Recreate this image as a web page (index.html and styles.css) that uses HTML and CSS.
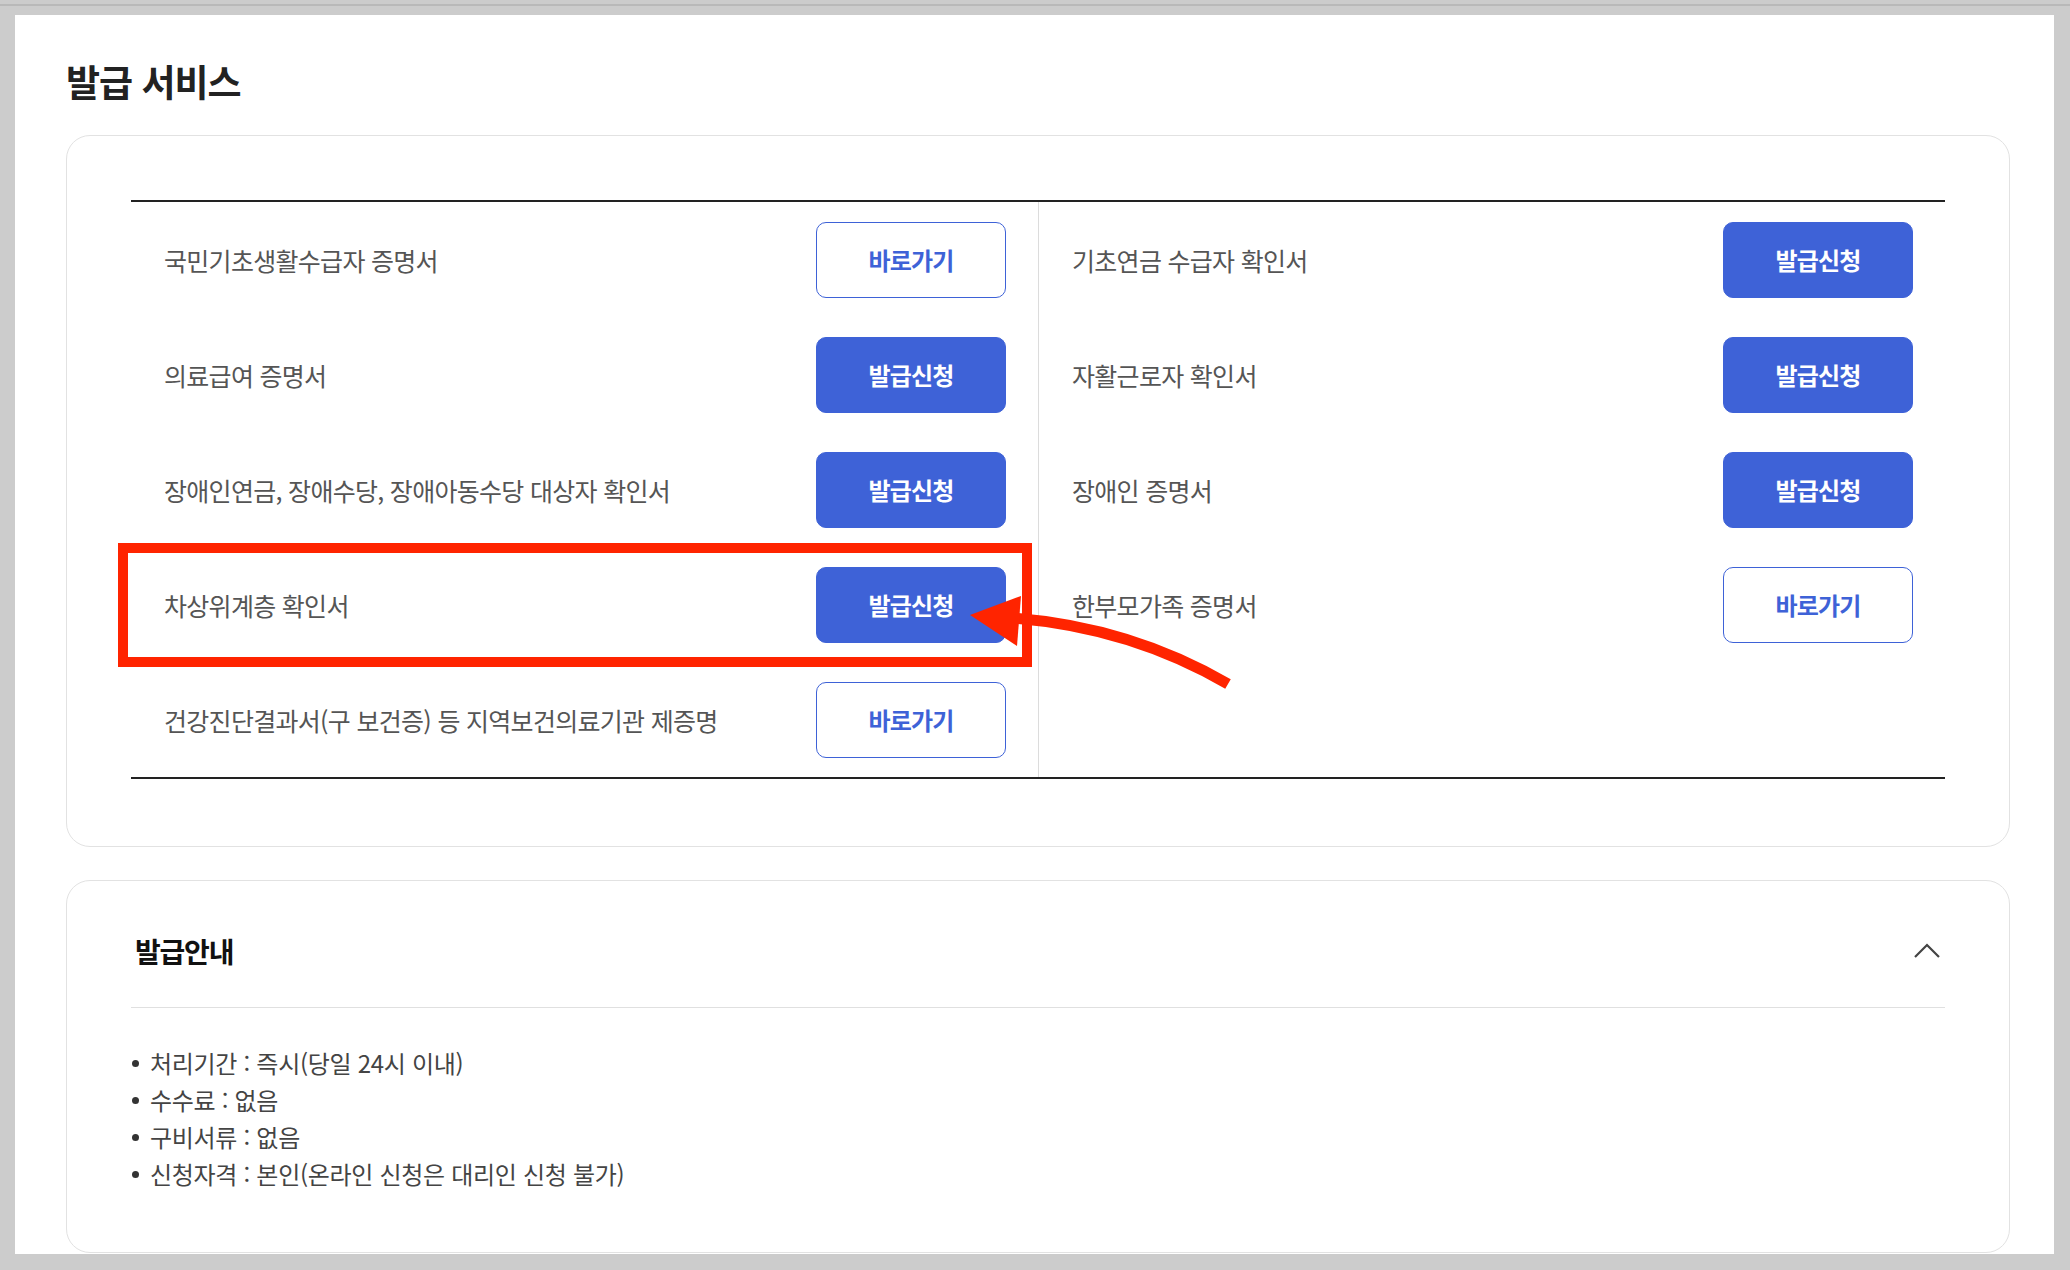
FILE: index.html
```html
<!DOCTYPE html>
<html lang="ko">
<head>
    <meta charset="UTF-8">
    <meta name="viewport" content="width=device-width, initial-scale=1.0">
    <title>발급 서비스</title>
    <link rel="stylesheet" href="styles.css">
</head>
<body>
    <div class="top-line"></div>
    <div class="panel">
        <h2 class="page-title">발급 서비스</h2>

        <div class="card">
            <div class="svc-table">
                <div class="svc-col">
                    <div class="svc-row">
                        <span class="svc-name">국민기초생활수급자 증명서</span>
                        <a class="btn btn-line" href="#">바로가기</a>
                    </div>
                    <div class="svc-row">
                        <span class="svc-name">의료급여 증명서</span>
                        <a class="btn" href="#">발급신청</a>
                    </div>
                    <div class="svc-row">
                        <span class="svc-name">장애인연금, 장애수당, 장애아동수당 대상자 확인서</span>
                        <a class="btn" href="#">발급신청</a>
                    </div>
                    <div class="svc-row">
                        <span class="svc-name">차상위계층 확인서</span>
                        <a class="btn" href="#">발급신청</a>
                        <div class="highlight"></div>
                    </div>
                    <div class="svc-row">
                        <span class="svc-name">건강진단결과서(구 보건증) 등 지역보건의료기관 제증명</span>
                        <a class="btn btn-line" href="#">바로가기</a>
                    </div>
                </div>
                <div class="svc-col">
                    <div class="svc-row">
                        <span class="svc-name">기초연금 수급자 확인서</span>
                        <a class="btn" href="#">발급신청</a>
                    </div>
                    <div class="svc-row">
                        <span class="svc-name">자활근로자 확인서</span>
                        <a class="btn" href="#">발급신청</a>
                    </div>
                    <div class="svc-row">
                        <span class="svc-name">장애인 증명서</span>
                        <a class="btn" href="#">발급신청</a>
                    </div>
                    <div class="svc-row">
                        <span class="svc-name">한부모가족 증명서</span>
                        <a class="btn btn-line" href="#">바로가기</a>
                    </div>
                </div>
            </div>
        </div>

        <div class="card guide">
            <div class="guide-head">
                <h3 class="guide-title">발급안내</h3>
                <svg class="chevron" width="28" height="16" viewBox="0 0 28 16">
                    <polyline points="2,14 14,2 26,14" fill="none" stroke="#444" stroke-width="2.2"/>
                </svg>
            </div>
            <ul class="guide-list">
                <li>처리기간 : 즉시(당일 24시 이내)</li>
                <li>수수료 : 없음</li>
                <li>구비서류 : 없음</li>
                <li>신청자격 : 본인(온라인 신청은 대리인 신청 불가)</li>
            </ul>
        </div>

        <!-- annotation arrow -->
        <svg class="arrow" width="2039" height="1239" viewBox="0 0 2039 1239">
            <path d="M998,603 Q1115,612 1213,669" fill="none" stroke="#ff2400" stroke-width="11"/>
            <polygon points="955,600 1006,581 1002,631" fill="#ff2400"/>
        </svg>
    </div>
</body>
</html>
```

FILE: styles.css
```css
* {
    margin: 0;
    padding: 0;
    box-sizing: border-box;
}

body {
    font-family: "Noto Sans CJK KR", "Noto Sans", sans-serif;
    background: #cccccc;
    padding: 4px 16px 0 15px;
    height: 1270px;
    overflow: hidden;
}

.top-line {
    height: 2px;
    background: #b9b9b9;
    margin: 0 -16px 9px -15px;
}

.panel {
    position: relative;
    background: #fff;
    height: 1239px;
    overflow: hidden;
    padding: 41px 44px 0 51px;
}

.page-title {
    font-size: 37px;
    font-weight: 700;
    line-height: 50px;
    color: #222;
    letter-spacing: -1px;
    margin-bottom: 29px;
}

.card {
    border: 1px solid #e2e2e2;
    border-radius: 24px;
    padding: 64px 64px 67px;
    background: #fff;
}

.svc-table {
    display: grid;
    grid-template-columns: 1fr 1fr;
    border-top: 2px solid #222;
    border-bottom: 2px solid #222;
}

.svc-col + .svc-col {
    border-left: 1px solid #dcdcdc;
}

.svc-row {
    position: relative;
    display: flex;
    align-items: center;
    justify-content: space-between;
    height: 115px;
    padding: 0 32px 0 33px;
}

.svc-name {
    font-size: 25px;
    color: #555;
    letter-spacing: -0.7px;
}

.btn {
    display: flex;
    align-items: center;
    justify-content: center;
    width: 190px;
    height: 76px;
    border-radius: 10px;
    background: #3e62d7;
    border: 1.5px solid #3e62d7;
    color: #fff;
    font-size: 24px;
    font-weight: 700;
    letter-spacing: -0.8px;
    text-decoration: none;
}

.btn-line {
    background: #fff;
    color: #3e62d7;
}

.highlight {
    position: absolute;
    top: -4px;
    bottom: -5px;
    left: -13px;
    right: 6px;
    border: 10px solid #ff2400;
    pointer-events: none;
}

.guide {
    margin-top: 33px;
    padding: 0 64px 60px;
}

.guide-head {
    display: flex;
    align-items: center;
    justify-content: space-between;
    padding: 50px 4px 36px 4px;
    border-bottom: 1px solid #e0e0e0;
}

.guide-title {
    font-size: 28px;
    font-weight: 700;
    line-height: 40px;
    color: #111;
    letter-spacing: -1.2px;
}

.guide-list {
    list-style: none;
    padding-top: 36px;
}

.guide-list li {
    position: relative;
    font-size: 24px;
    line-height: 37px;
    color: #444;
    letter-spacing: -0.3px;
    padding-left: 19px;
}

.guide-list li::before {
    content: "";
    position: absolute;
    left: 1px;
    top: 16px;
    width: 7px;
    height: 7px;
    border-radius: 50%;
    background: #333;
}

.arrow {
    position: absolute;
    top: 0;
    left: 0;
    pointer-events: none;
}
```
